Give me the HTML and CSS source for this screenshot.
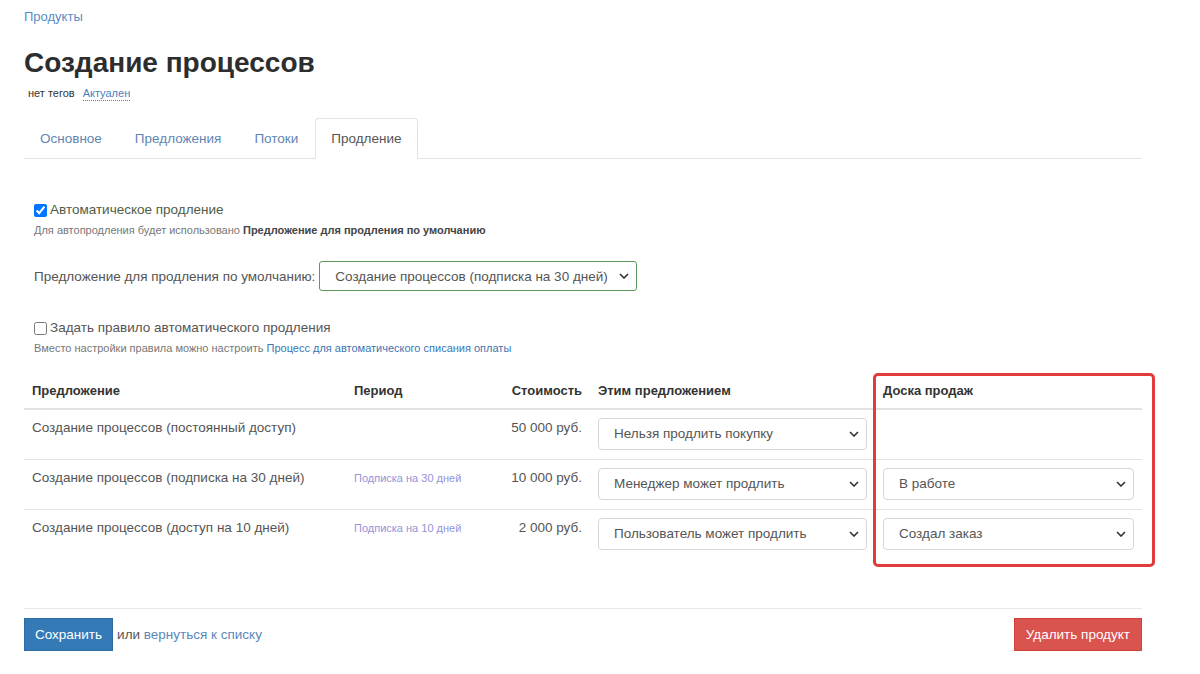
FILE: index.html
```html
<!DOCTYPE html>
<html lang="ru">
<head>
<meta charset="utf-8">
<title>Создание процессов</title>
<link rel="stylesheet" href="styles.css">
</head>
<body>
<div class="page">
  <div class="breadcrumb"><a href="#">Продукты</a></div>
  <h1 class="title">Создание процессов</h1>
  <div class="meta">
    <span class="tags">нет тегов</span>
    <a href="#" class="status">Актуален</a>
  </div>

  <ul class="tabs">
    <li class="tab"><a href="#">Основное</a></li>
    <li class="tab"><a href="#">Предложения</a></li>
    <li class="tab"><a href="#">Потоки</a></li>
    <li class="tab active"><a href="#">Продление</a></li>
  </ul>

  <div class="panel">
    <label class="check check-ok">
      <input type="checkbox" checked>
      <span>Автоматическое продление</span>
    </label>
    <div class="hint">Для автопродления будет использовано <b>Предложение для продления по умолчанию</b></div>

    <div class="field-row">
      <span class="field-label">Предложение для продления по умолчанию:</span>
      <div class="select select-ok">
        <span>Создание процессов (подписка на 30 дней)</span>
        <svg class="caret" viewBox="0 0 10 6"><path d="M1 1l4 4 4-4"/></svg>
      </div>
    </div>

    <label class="check">
      <input type="checkbox">
      <span>Задать правило автоматического продления</span>
    </label>
    <div class="hint">Вместо настройки правила можно настроить <a href="#">Процесс для автоматического списания оплаты</a></div>

    <div class="table-wrap">
      <table class="offers">
        <thead>
          <tr>
            <th class="c-name">Предложение</th>
            <th class="c-period">Период</th>
            <th class="c-price">Стоимость</th>
            <th class="c-mode">Этим предложением</th>
            <th class="c-board">Доска продаж</th>
          </tr>
        </thead>
        <tbody>
          <tr>
            <td class="c-name">Создание процессов (постоянный доступ)</td>
            <td class="c-period"></td>
            <td class="c-price">50 000 руб.</td>
            <td class="c-mode">
              <div class="select"><span>Нельзя продлить покупку</span><svg class="caret" viewBox="0 0 10 6"><path d="M1 1l4 4 4-4"/></svg></div>
            </td>
            <td class="c-board"></td>
          </tr>
          <tr>
            <td class="c-name">Создание процессов (подписка на 30 дней)</td>
            <td class="c-period"><span class="period">Подписка на 30 дней</span></td>
            <td class="c-price">10 000 руб.</td>
            <td class="c-mode">
              <div class="select"><span>Менеджер может продлить</span><svg class="caret" viewBox="0 0 10 6"><path d="M1 1l4 4 4-4"/></svg></div>
            </td>
            <td class="c-board">
              <div class="select"><span>В работе</span><svg class="caret" viewBox="0 0 10 6"><path d="M1 1l4 4 4-4"/></svg></div>
            </td>
          </tr>
          <tr class="last">
            <td class="c-name">Создание процессов (доступ на 10 дней)</td>
            <td class="c-period"><span class="period">Подписка на 10 дней</span></td>
            <td class="c-price">2 000 руб.</td>
            <td class="c-mode">
              <div class="select"><span>Пользователь может продлить</span><svg class="caret" viewBox="0 0 10 6"><path d="M1 1l4 4 4-4"/></svg></div>
            </td>
            <td class="c-board">
              <div class="select"><span>Создал заказ</span><svg class="caret" viewBox="0 0 10 6"><path d="M1 1l4 4 4-4"/></svg></div>
            </td>
          </tr>
        </tbody>
      </table>
      <div class="highlight"></div>
    </div>
  </div>

  <div class="actions">
    <div class="actions-left">
      <button class="btn btn-primary">Сохранить</button>
      <span class="or">или <a href="#">вернуться к списку</a></span>
    </div>
    <button class="btn btn-danger">Удалить продукт</button>
  </div>
</div>
</body>
</html>
```

FILE: styles.css
```css
* { box-sizing: border-box; }

html, body {
  margin: 0;
  padding: 0;
  background: #fff;
}

body {
  font-family: "Liberation Sans", Arial, sans-serif;
  font-size: 13.5px;
  color: #555;
}

a { color: #3f78b5; text-decoration: none; }

.page {
  width: 1118px;
  margin-left: 24px;
  padding-top: 9px;
}

.breadcrumb {
  font-size: 13px;
  line-height: 16px;
}
.breadcrumb a { color: #5a8cc4; }

.title {
  margin: 21px 0 0;
  font-size: 28px;
  line-height: 34px;
  font-weight: 700;
  color: #2d2d2d;
}

.meta {
  margin-top: 6px;
  padding-left: 4px;
  font-size: 11px;
  line-height: 14px;
  display: flex;
  gap: 8px;
}
.meta .tags { color: #333; }
.meta .status {
  color: #4a7fbd;
  border-bottom: 1px dotted #4a7fbd;
}

/* tab strip */
.tabs {
  list-style: none;
  margin: 17px 0 0;
  padding: 0;
  display: flex;
  border-bottom: 1px solid #e2e2e2;
  height: 41px;
}
.tab {
  margin-right: 1px;
}
.tab a {
  display: block;
  height: 41px;
  padding: 11px 15px 0;
  color: #5f86b3;
  font-size: 13.5px;
  line-height: 18px;
  border: 1px solid transparent;
  border-radius: 4px 4px 0 0;
}
.tab.active a {
  color: #555;
  background: #fff;
  border-color: #e2e2e2;
  border-bottom-color: #fff;
}

.panel {
  padding: 42px 0 0 10px;
}

.check {
  display: flex;
  align-items: center;
  gap: 3px;
  font-size: 13.5px;
  line-height: 18px;
  color: #555;
}
.check input {
  margin: 0;
  width: 13px;
  height: 13px;
}
.check-ok { color: #4f5d45; }

.hint {
  margin-top: 4px;
  font-size: 11px;
  line-height: 14px;
  color: #777;
}
.hint b { color: #444; }
.hint a { color: #3a76b4; }

.field-row {
  display: flex;
  align-items: center;
  gap: 4px;
  margin: 24px 0 28px;
}
.field-label { font-size: 13.5px; color: #555; }

/* select-like control */
.select {
  position: relative;
  display: flex;
  align-items: center;
  height: 32px;
  padding: 0 30px 0 15px;
  border: 1px solid #d6d6d6;
  border-radius: 4px;
  background: #fff;
  font-size: 13.5px;
  color: #555;
  white-space: nowrap;
}
.select-ok {
  width: 318px;
  height: 30px;
  border-color: #5c9a5c;
  border-radius: 3px;
}
.caret {
  position: absolute;
  right: 7px;
  top: 50%;
  width: 10px;
  height: 6px;
  margin-top: -3px;
  fill: none;
  stroke: #333;
  stroke-width: 1.6;
}

.table-wrap {
  position: relative;
  margin-top: 16px;
  margin-left: -10px;
}

.offers {
  width: 100%;
  border-collapse: collapse;
  table-layout: fixed;
}
.offers th {
  font-size: 13px;
  font-weight: 700;
  color: #333;
  text-align: left;
  padding: 11px 8px 8px;
  line-height: 18px;
  border-bottom: 2px solid #e2e2e2;
}
.offers td {
  padding: 8px;
  vertical-align: top;
  font-size: 13.5px;
  line-height: 18px;
  border-bottom: 1px solid #e2e2e2;
  height: 50px;
  white-space: nowrap;
}
.offers td.c-name, .offers td.c-price, .offers td.c-period { padding-top: 9px; }
.offers tr.last td { border-bottom: none; }

.c-name { width: 322px; }
.c-period { width: 120px; }
.c-price { width: 124px; }
.offers th.c-price, .offers td.c-price { text-align: right; }
.c-mode { width: 285px; }
.c-board { width: auto; }

.period {
  font-size: 11px;
  color: #9393d8;
}

/* red frame drawn over the sales-board column */
.highlight {
  position: absolute;
  left: 849px;
  top: 2px;
  width: 282px;
  height: 194px;
  border: 3px solid #e23b3b;
  border-radius: 5px;
  pointer-events: none;
}

.actions {
  margin-top: 49px;
  border-top: 1px solid #e8e8e8;
  padding-top: 9px;
  display: flex;
  justify-content: space-between;
  align-items: flex-start;
}
.actions-left {
  display: flex;
  align-items: center;
  gap: 4px;
}
.btn {
  font-family: inherit;
  font-size: 13.5px;
  height: 33px;
  padding: 0 11px;
  border: 1px solid transparent;
  border-radius: 0;
  color: #fff;
  cursor: pointer;
}
.btn-primary { background: #337ab7; border-color: #2e6da4; padding: 0 10px; }
.btn-danger { background: #d9534f; border-color: #d43f3a; }
.or { color: #555; font-size: 13.5px; }
.or a { color: #5b87b8; }
```
